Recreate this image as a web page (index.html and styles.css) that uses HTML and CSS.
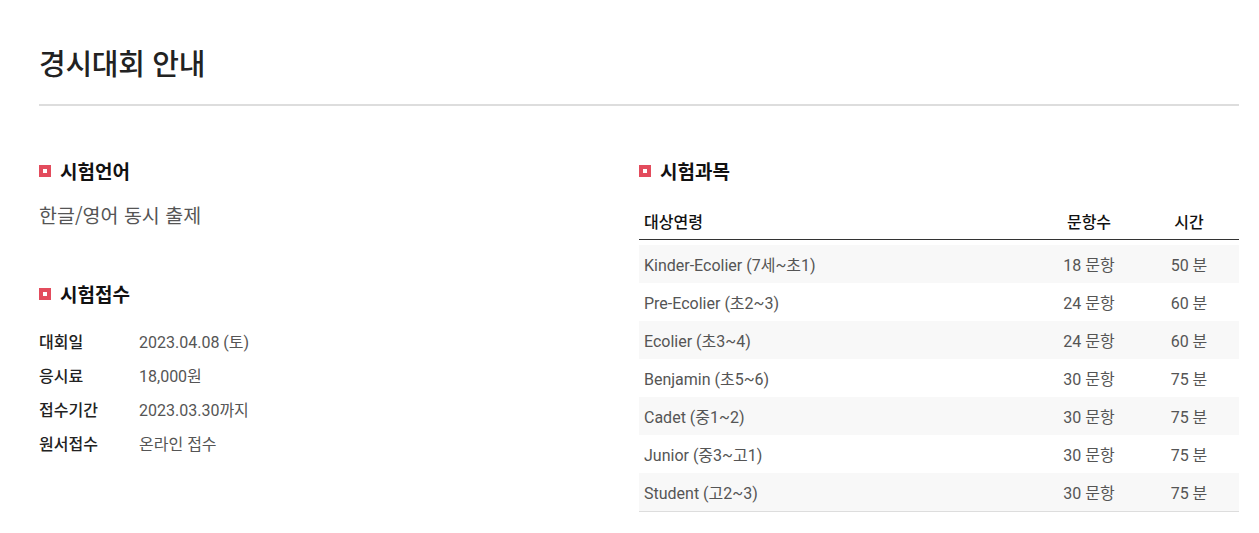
FILE: index.html
```html
<!DOCTYPE html>
<html lang="ko">
<head>
<meta charset="utf-8">
<title>경시대회 안내</title>
<link rel="stylesheet" href="styles.css">
</head>
<body>
<div class="page">
  <header class="header">
    <h1 class="title">경시대회 안내</h1>
  </header>
  <div class="content">
    <div class="col">
      <section class="sec">
        <h2 class="sec-title"><span class="bullet"></span>시험언어</h2>
        <p class="lang">한글/영어 동시 출제</p>
      </section>
      <section class="sec sec-apply">
        <h2 class="sec-title"><span class="bullet"></span>시험접수</h2>
        <dl class="info">
          <div class="info-row"><dt>대회일</dt><dd>2023.04.08 (토)</dd></div>
          <div class="info-row"><dt>응시료</dt><dd>18,000원</dd></div>
          <div class="info-row"><dt>접수기간</dt><dd>2023.03.30까지</dd></div>
          <div class="info-row"><dt>원서접수</dt><dd>온라인 접수</dd></div>
        </dl>
      </section>
    </div>
    <div class="col">
      <section class="sec">
        <h2 class="sec-title"><span class="bullet"></span>시험과목</h2>
        <div class="tbl">
          <div class="thead">
            <div class="c-age">대상연령</div>
            <div class="c-num">문항수</div>
            <div class="c-time">시간</div>
          </div>
          <div class="tbody">
            <div class="tr"><div class="c-age">Kinder-Ecolier (7세~초1)</div><div class="c-num">18 문항</div><div class="c-time">50 분</div></div>
            <div class="tr"><div class="c-age">Pre-Ecolier (초2~3)</div><div class="c-num">24 문항</div><div class="c-time">60 분</div></div>
            <div class="tr"><div class="c-age">Ecolier (초3~4)</div><div class="c-num">24 문항</div><div class="c-time">60 분</div></div>
            <div class="tr"><div class="c-age">Benjamin (초5~6)</div><div class="c-num">30 문항</div><div class="c-time">75 분</div></div>
            <div class="tr"><div class="c-age">Cadet (중1~2)</div><div class="c-num">30 문항</div><div class="c-time">75 분</div></div>
            <div class="tr"><div class="c-age">Junior (중3~고1)</div><div class="c-num">30 문항</div><div class="c-time">75 분</div></div>
            <div class="tr"><div class="c-age">Student (고2~3)</div><div class="c-num">30 문항</div><div class="c-time">75 분</div></div>
          </div>
        </div>
      </section>
    </div>
  </div>
</div>
</body>
</html>
```

FILE: styles.css
```css
* { box-sizing: border-box; }
html, body { margin: 0; padding: 0; background: #fff; }
body {
  font-family: Roboto, "Noto Sans CJK KR", sans-serif;
  color: #222;
}
.page {
  width: 1200px;
  margin-left: 39px;
}
.header {
  padding-top: 38px;
  border-bottom: 2px solid #ddd;
  padding-bottom: 18px;
}
.title {
  margin: 0;
  font-family: "Noto Sans CJK KR", sans-serif;
  font-size: 29px;
  line-height: 48px;
  font-weight: 500;
  color: #222;
  letter-spacing: -0.3px;
}
.content {
  display: grid;
  grid-template-columns: 600px 600px;
  padding-top: 52px;
}
.sec-title {
  margin: 0;
  display: flex;
  align-items: center;
  gap: 9px;
  font-family: "Noto Sans CJK KR", sans-serif;
  font-size: 19px;
  line-height: 26px;
  font-weight: 700;
  color: #111;
}
.bullet {
  width: 12px;
  height: 12px;
  border: 4px solid #e34c5d;
  background: #fff;
  flex: none;
}
.lang {
  margin: 18px 0 0;
  font-family: "Noto Sans CJK KR", sans-serif;
  font-size: 19.5px;
  line-height: 26px;
  color: #555;
}
.sec-apply { margin-top: 53px; }
.info {
  margin: 17px 0 0;
}
.info-row {
  display: flex;
  height: 34px;
  align-items: center;
  font-size: 16px;
}
.info dt {
  width: 100px;
  color: #222;
  font-weight: 500;
}
.info dd {
  margin: 0;
  color: #555;
}
.tbl {
  margin-top: 18px;
  font-size: 16px;
}
.thead {
  display: flex;
  height: 38px;
  align-items: center;
  border-bottom: 1px solid #333;
  color: #111;
  font-weight: 500;
}
.tbody {
  margin-top: 5px;
  border-bottom: 1px solid #ddd;
}
.tr {
  display: flex;
  height: 38px;
  align-items: center;
  color: #555;
}
.tr:nth-child(odd) { background: #f8f8f8; }
.c-age { flex: 1; padding-left: 5px; }
.c-num { width: 100px; text-align: center; }
.c-time { width: 100px; text-align: center; }
```
